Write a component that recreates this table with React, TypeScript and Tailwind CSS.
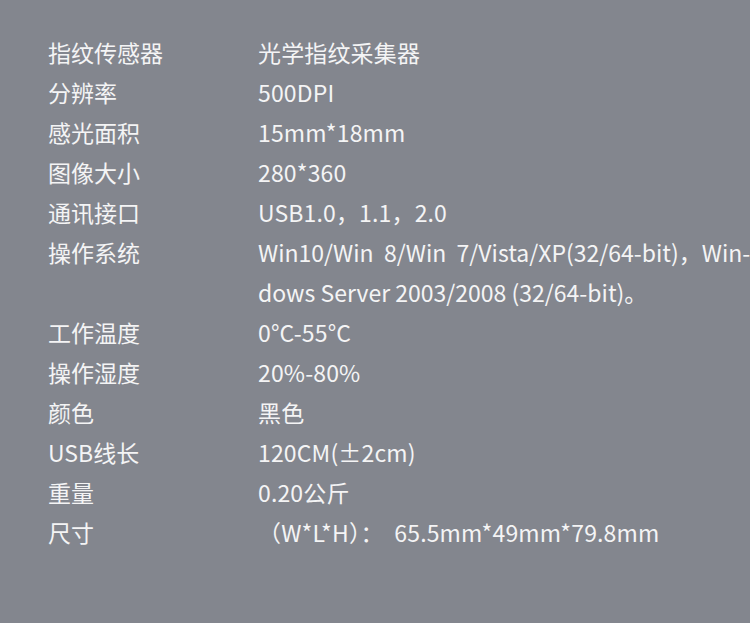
const SPECS: [string, React.ReactNode][] = [
  ['指纹传感器', '光学指纹采集器'],
  ['分辨率', '500DPI'],
  ['感光面积', '15mm*18mm'],
  ['图像大小', '280*360'],
  ['通讯接口', 'USB1.0，1.1，2.0'],
  [
    '操作系统',
    <span className="tracking-normal">
      Win10/Win&nbsp;&nbsp;8/Win&nbsp;&nbsp;7/Vista/XP(32/64-bit)，Win-
      <br />
      dows Server 2003/2008 (32/64-bit)。
    </span>,
  ],
  ['工作温度', '0°C-55°C'],
  ['操作湿度', '20%-80%'],
  ['颜色', '黑色'],
  ['USB线长', '120CM(±2cm)'],
  ['重量', '0.20公斤'],
  ['尺寸', <>（W*L*H）：&nbsp;&nbsp;65.5mm*49mm*79.8mm</>],
];

export default function App() {
  return (
    <div
      className="w-[750px] h-[623px] overflow-hidden bg-[#83868e] pt-[32px] pl-[48px] text-[#f4f4f5] text-[23px] leading-[40px]"
      style={{ fontFamily: '"Noto Sans CJK SC", "Noto Sans", sans-serif' }}
    >
      <div className="grid grid-cols-[210px_1fr]">
        {SPECS.map(([label, value]) => (
          <div key={label} className="contents">
            <div className="whitespace-nowrap">{label}</div>
            <div className="whitespace-nowrap tracking-[0.15px]">{value}</div>
          </div>
        ))}
      </div>
    </div>
  );
}
